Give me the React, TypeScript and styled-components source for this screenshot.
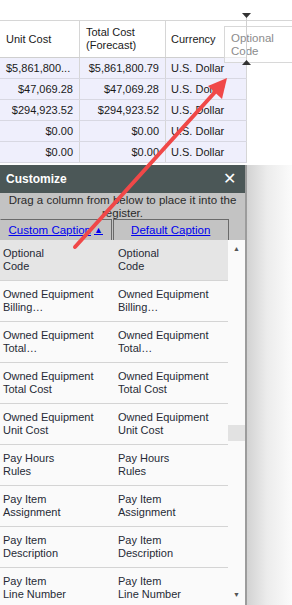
import React from "react";
import styled, { createGlobalStyle } from "styled-components";

const Global = createGlobalStyle`
  html, body { margin: 0; padding: 0; background: #ffffff; }
  body { font-family: "Liberation Sans", Arial, sans-serif; }
  * { box-sizing: border-box; }
`;

const Root = styled.div`
  position: relative;
  width: 292px;
  height: 605px;
  overflow: hidden;
  background: #ffffff;
  display: flex;
  flex-direction: column;
`;

const TopGap = styled.div`
  height: 20px;
  flex: none;
`;

const TopArea = styled.div`
  display: flex;
  border-top: 1px solid #d6d6d6;
  flex: none;
`;

const Grid = styled.div`
  width: 247px;
  display: flex;
  flex-direction: column;
  flex: none;
`;

const Side = styled.div`
  flex: 1;
  background: #ffffff;
`;

const Row = styled.div<{ $header?: boolean }>`
  display: grid;
  grid-template-columns: 80px 86px 81px;
  height: ${(p) => (p.$header ? "37px" : "21px")};
  background: ${(p) => (p.$header ? "#ffffff" : "#efeffc")};
  border-bottom: 1px solid ${(p) => (p.$header ? "#cfcfcf" : "#d8d8e2")};
`;

const Cell = styled.div<{ $align?: "left" | "right"; $header?: boolean }>`
  display: flex;
  align-items: center;
  justify-content: ${(p) => (p.$align === "right" ? "flex-end" : "flex-start")};
  padding: ${(p) => (p.$header ? "0 4px 0 6px" : p.$align === "right" ? "0 6px 0 4px" : "0 4px 0 6px")};
  border-right: 1px solid #d6d6d6;
  font-size: 11px;
  line-height: 13px;
  color: #1a1a1a;
  white-space: ${(p) => (p.$header ? "normal" : "nowrap")};
  overflow: hidden;
`;

const CurrencyCell = styled(Cell)`
  padding-left: 5px;
`;

const Gap = styled.div`
  height: 2px;
  flex: none;
`;

const Lower = styled.div`
  flex: 1;
  display: flex;
  min-height: 0;
`;

const Panel = styled.div`
  width: 247px;
  flex: none;
  display: flex;
  flex-direction: column;
  border-right: 2px solid #9c9c9c;
  background: #c3c3c3;
`;

const Shadow = styled.div`
  flex: 1;
  background: linear-gradient(to right, #d2d2d2 0%, #ececec 45%, #fbfbfb 100%);
`;

const PanelHeader = styled.div`
  height: 28px;
  background: #4b5757;
  display: flex;
  align-items: center;
  justify-content: space-between;
  padding: 0 9px 0 6px;
  color: #ffffff;
  font-size: 12px;
  font-weight: bold;
  flex: none;
`;

const Close = styled.span`
  font-size: 16px;
  font-weight: normal;
  line-height: 1;
`;

const Hint = styled.div`
  height: 26px;
  padding-top: 1px;
  text-align: center;
  font-size: 11.5px;
  line-height: 13px;
  color: #2a2a2a;
  flex: none;
`;

const CaptionRow = styled.div`
  display: flex;
  height: 21px;
  flex: none;
  padding-right: 16px;
`;

const CaptionBtn = styled.div<{ $first?: boolean }>`
  width: ${(p) => (p.$first ? "112px" : "117px")};
  margin-left: ${(p) => (p.$first ? "0" : "1px")};
  border: 1px solid #6a6a6a;
  border-left-color: ${(p) => (p.$first ? "transparent" : "#6a6a6a")};
  border-bottom: none;
  display: flex;
  align-items: center;
  justify-content: center;
  font-size: 11.5px;
  color: #0000ee;
  text-decoration: underline;
  white-space: nowrap;
`;

const Tri = styled.span`
  font-size: 9px;
  margin-left: 3px;
  text-decoration: underline;
`;

const ListWrap = styled.div`
  flex: 1;
  display: flex;
  background: #fafafa;
  min-height: 0;
`;

const List = styled.div`
  width: 228px;
  flex: none;
  display: flex;
  flex-direction: column;
  overflow: hidden;
`;

const Item = styled.div<{ $selected?: boolean }>`
  flex: none;
  height: 41px;
  display: grid;
  grid-template-columns: 115px 113px;
  padding: 7px 0 0 3px;
  background: ${(p) => (p.$selected ? "#e5e5e5" : "#fafafa")};
  border-bottom: 1px solid #d4d4d4;
  font-size: 11px;
  line-height: 13px;
  color: #262a36;
`;

const Scroll = styled.div`
  flex: 1;
  display: flex;
  flex-direction: column;
  align-items: stretch;
  padding: 5px 0 6px;
`;

const Arrow = styled.div`
  height: 8px;
  display: flex;
  justify-content: center;
  font-size: 7px;
  color: #555;
  line-height: 8px;
`;

const ScrollTrack = styled.div`
  flex: 1;
  display: flex;
  flex-direction: column;
  padding-top: 172px;
`;

const Thumb = styled.div`
  height: 16px;
  background: #e2e2e2;
`;

const Overlay = styled.svg`
  position: absolute;
  left: 0;
  top: 0;
  pointer-events: none;
`;

const Ghost = styled.div`
  position: absolute;
  left: 224px;
  top: 26px;
  width: 70px;
  height: 37px;
  border: 1px solid #d8d8d8;
  background: rgba(255, 255, 255, 0.55);
  padding: 5px 0 0 6px;
  font-size: 11.5px;
  line-height: 13px;
  color: #8c8c8c;
`;

const rows = [
  ["$5,861,800...", "$5,861,800.79"],
  ["$47,069.28", "$47,069.28"],
  ["$294,923.52", "$294,923.52"],
  ["$0.00", "$0.00"],
  ["$0.00", "$0.00"],
];

const items: [string, string][] = [
  ["Optional", "Code"],
  ["Owned Equipment", "Billing…"],
  ["Owned Equipment", "Total…"],
  ["Owned Equipment", "Total Cost"],
  ["Owned Equipment", "Unit Cost"],
  ["Pay Hours", "Rules"],
  ["Pay Item", "Assignment"],
  ["Pay Item", "Description"],
  ["Pay Item", "Line Number"],
];

export default function App() {
  return (
    <>
      <Global />
      <Root>
        <TopGap />
        <TopArea>
          <Grid>
            <Row $header>
              <Cell $header>Unit Cost</Cell>
              <Cell $header>
                Total Cost
                <br />
                (Forecast)
              </Cell>
              <CurrencyCell $header>Currency</CurrencyCell>
            </Row>
            {rows.map((r, i) => (
              <Row key={i}>
                <Cell $align={i === 0 ? "left" : "right"}>{r[0]}</Cell>
                <Cell $align="right">{r[1]}</Cell>
                <CurrencyCell>U.S. Dollar</CurrencyCell>
              </Row>
            ))}
          </Grid>
          <Side />
        </TopArea>
        <Gap />
        <Lower>
          <Panel>
            <PanelHeader>
              <span>Customize</span>
              <Close>✕</Close>
            </PanelHeader>
            <Hint>
              Drag a column from below to place it into the
              <br />
              register.
            </Hint>
            <CaptionRow>
              <CaptionBtn $first>
                Custom Caption<Tri>▲</Tri>
              </CaptionBtn>
              <CaptionBtn>Default Caption</CaptionBtn>
            </CaptionRow>
            <ListWrap>
              <List>
                {items.map((it, i) => (
                  <Item key={i} $selected={i === 0}>
                    <div>
                      {it[0]}
                      <br />
                      {it[1]}
                    </div>
                    <div>
                      {it[0]}
                      <br />
                      {it[1]}
                    </div>
                  </Item>
                ))}
              </List>
              <Scroll>
                <Arrow>▲</Arrow>
                <ScrollTrack>
                  <Thumb />
                </ScrollTrack>
                <Arrow>▼</Arrow>
              </Scroll>
            </ListWrap>
          </Panel>
          <Shadow />
        </Lower>
        <Ghost>
          Optional
          <br />
          Code
        </Ghost>
        <Overlay width="292" height="605" viewBox="0 0 292 605">
          <line x1="246.5" y1="17" x2="246.5" y2="62" stroke="#d0d0d0" strokeWidth="1" />
          <polygon points="242,13 251,13 246.5,18" fill="#333" />
          <polygon points="242,65 251,65 246.5,60" fill="#333" />
          <line x1="75" y1="247" x2="216" y2="91" stroke="#f04848" strokeWidth="4" strokeLinecap="round" />
          <polygon points="227,78 208,86 222,99" fill="#f04848" />
        </Overlay>
      </Root>
    </>
  );
}
